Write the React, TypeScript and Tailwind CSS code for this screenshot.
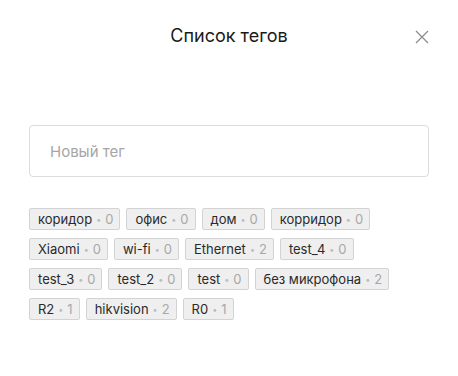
import React from "react";

const tags: [string, number][] = [
  ["коридор", 0],
  ["офис", 0],
  ["дом", 0],
  ["корридор", 0],
  ["Xiaomi", 0],
  ["wi-fi", 0],
  ["Ethernet", 2],
  ["test_4", 0],
  ["test_3", 0],
  ["test_2", 0],
  ["test", 0],
  ["без микрофона", 2],
  ["R2", 1],
  ["hikvision", 2],
  ["R0", 1],
];

export default function App() {
  return (
    <div
      className="w-[458px] h-[376px] bg-white px-[29px] pt-[25px]"
      style={{ fontFamily: "Inter, 'Noto Sans', sans-serif" }}
    >
      <div className="relative flex justify-center">
        <h1 className="text-[18px] leading-[22px] text-[#1a1a1a] font-normal">Список тегов</h1>
        <button className="absolute right-[0px] top-[5px] w-[14px] h-[14px] text-[#8a8a8a]">
          <svg width="14" height="14" viewBox="0 0 14 14" fill="none">
            <path d="M1 1L13 13M13 1L1 13" stroke="currentColor" strokeWidth="1.2" />
          </svg>
        </button>
      </div>
      <input
        placeholder="Новый тег"
        className="mt-[78px] w-full h-[52px] border border-[#dcdcdc] rounded-[4px] px-[20px] text-[15px] text-[#333] placeholder:text-[#a6a6a6] outline-none"
      />
      <div className="mt-[31px] flex flex-wrap gap-x-[6px] gap-y-[8px]">
        {tags.map(([name, count], i) => (
          <div
            key={i}
            className="h-[22px] flex items-center pl-[8px] pr-[6px] bg-[#efefef] border border-[#d3d3d3] rounded-[2px] text-[13px] leading-none"
          >
            <span className="text-[#2a2a2a]">{name}</span>
            <span className="text-[#bdbdbd] mx-[4px] text-[9px]">•</span>
            <span className="text-[#a8a8a8]">{count}</span>
          </div>
        ))}
      </div>
    </div>
  );
}
